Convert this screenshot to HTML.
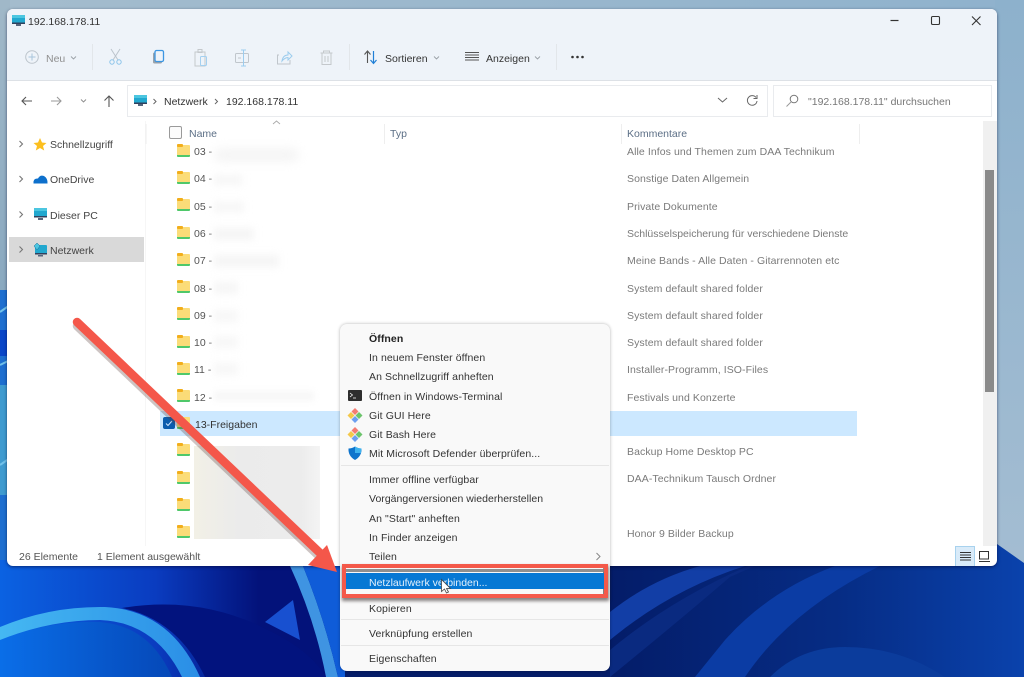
<!DOCTYPE html>
<html lang="de"><head><meta charset="utf-8"><title>192.168.178.11</title>
<style>
html,body{margin:0;padding:0;width:1024px;height:677px;overflow:hidden;background:#0a3aa8}
body{font-family:"Liberation Sans",sans-serif;font-size:10.5px;color:#333;position:relative}
#root{position:absolute;inset:0;filter:blur(.35px)}
.a{position:absolute}
.t{position:absolute;line-height:14px;height:14px;white-space:nowrap;margin-top:1px}
.win{position:absolute;left:7px;top:9px;width:990px;height:557px;background:#fff;border-radius:6px;box-shadow:0 1px 3px rgba(0,0,40,.55);overflow:hidden}
.c{color:#7a7a7a;letter-spacing:.08px}
.f{position:absolute;left:177px;width:13px;height:12px;background:#fbdc78;border-radius:1px;border-bottom:2px solid #4fc86a;box-sizing:border-box}
.f:before{content:"";position:absolute;left:0;top:-1px;width:6px;height:3px;background:#f2ae1c;border-radius:1px}
.n{color:#555;font-size:10.5px}
.menu{position:absolute;left:340px;top:324px;width:270px;height:347px;background:#f9f9f9;border-radius:7px;box-shadow:0 0 3px rgba(0,0,0,.3)}
.m{color:#333;letter-spacing:.09px}
.sep{position:absolute;left:341px;width:268px;height:1px;background:#e6e6e6}
svg{position:absolute;overflow:visible}
</style></head><body><div id="root">

<svg class="a" style="left:0;top:0" width="1024" height="677" viewBox="0 0 1024 677">
<defs>
<linearGradient id="sky" x1="0" y1="0" x2="1" y2="0"><stop offset="0" stop-color="#a4bccd"/><stop offset="1" stop-color="#8fb2cd"/></linearGradient>
<linearGradient id="bl" x1="0" y1="0" x2="0" y2="1"><stop offset="0" stop-color="#a0b8c8"/><stop offset="1" stop-color="#8aa9c0"/></linearGradient>
<linearGradient id="rt" x1="0" y1="0" x2="0" y2="1"><stop offset="0" stop-color="#8db1cc"/><stop offset="1" stop-color="#a4bdd2"/></linearGradient>
<linearGradient id="top" x1="0" y1="0" x2="1" y2="0"><stop offset="0" stop-color="#0b62e2"/><stop offset=".45" stop-color="#0a3cc0"/><stop offset=".75" stop-color="#03127a"/><stop offset="1" stop-color="#03127a"/></linearGradient>
<linearGradient id="sw" x1="0" y1="0" x2="1" y2="0"><stop offset="0" stop-color="#45b8f2"/><stop offset="1" stop-color="#2a8ee6"/></linearGradient>
<linearGradient id="low" x1="0" y1="0" x2="1" y2="0"><stop offset="0" stop-color="#0a6ee8"/><stop offset="1" stop-color="#0548b8"/></linearGradient>
<linearGradient id="br" x1="0" y1="0" x2="1" y2="0"><stop offset="0" stop-color="#041c68"/><stop offset=".55" stop-color="#062c84"/><stop offset="1" stop-color="#0a42ac"/></linearGradient>
</defs>
<rect width="1024" height="677" fill="#041c68"/>
<rect width="1024" height="12" fill="url(#sky)"/>
<rect x="0" y="0" width="10" height="290" fill="url(#bl)"/>
<rect x="995" y="0" width="29" height="580" fill="url(#rt)"/>
<rect x="0" y="290" width="10" height="290" fill="#1e6fd0"/>
<rect x="0" y="330" width="10" height="26" fill="#0a46c8"/>
<rect x="0" y="385" width="10" height="110" fill="#3f9bd0"/>
<path d="M0 312L10 305M0 365L10 360M0 465L10 458" stroke="#72c2ea" stroke-width="2" fill="none"/>
<!-- bottom-left -->
<rect x="0" y="560" width="345" height="117" fill="url(#top)"/>
<path d="M0 640Q50 620 100 622Q150 626 172 677H0Z" fill="url(#low)"/>
<path d="M0 627Q50 606 105 607Q170 610 200 677H182Q155 622 100 620Q50 620 0 640Z" fill="url(#sw)"/>
<path d="M122 608Q200 595 268 630Q310 650 326 677H205Q178 620 122 608Z" fill="#02137e"/>
<path d="M265 622L293 600L300 640Z" fill="#1850d0"/>
<path d="M290 566H303Q325 620 338 677H326Q315 620 290 566Z" fill="#3f94e2"/>
<path d="M303 566H345V677H338Q325 620 303 566Z" fill="#0f5cd8"/>
<!-- bottom-right -->
<path d="M605 560H997V544L1024 563V677H605Z" fill="url(#br)"/>
<path d="M610 640Q670 590 745 566H700Q650 580 610 612Z" fill="#123ea6"/>
<path d="M610 677Q680 620 730 577L755 566H748Q670 600 610 650Z" fill="#0a2a80"/>
<path d="M880 566H835Q770 590 725 640L695 677H745Q790 610 880 566Z" fill="#0b3ca4"/>
<path d="M770 677Q800 647 845 647Q900 647 945 677Z" fill="#0b3c9c"/>
</svg>

<div class="win">
<div class="a" style="left:0;top:0;width:990px;height:71px;background:#eef3f9;border-bottom:1px solid #dde1e6"></div>
</div>

<!-- title -->
<svg style="left:12px;top:15px" width="13" height="12"><rect x="0" y="0" width="13" height="8.5" rx="1" fill="#22a8cf"/><rect x="0" y="0" width="13" height="3" fill="#4cc6e0"/><rect x="0" y="7.5" width="13" height="1.5" fill="#30415e"/><rect x="4" y="9" width="5" height="2" fill="#56657c"/></svg>
<div class="t" style="left:28px;top:14px;color:#333">192.168.178.11</div>
<svg style="left:0;top:0" width="1024" height="110" fill="none">
<path d="M890.5 20.5H898.5" stroke="#333" stroke-width="1.2"/>
<rect x="931.5" y="16.5" width="8" height="8" rx="1.2" stroke="#333" stroke-width="1.1"/>
<path d="M972 16.5L980.5 25M980.5 16.5L972 25" stroke="#333" stroke-width="1.1"/>
<!-- toolbar -->
<circle cx="32" cy="57" r="6.3" stroke="#bcc4cc"/><path d="M32 53.5V60.5M28.5 57H35.5" stroke="#a8c4dc"/>
<path d="M92.5 44V70M349.5 44V70M556.5 44V70" stroke="#e2e6ea"/>
<path d="M111 49L118 60M120 49L113 60" stroke="#bcc4cc"/><circle cx="112" cy="62" r="2.2" stroke="#8cc4ea"/><circle cx="119" cy="62" r="2.2" stroke="#8cc4ea"/>
<rect x="153" y="52.5" width="9" height="11" rx="1.5" fill="#9aa2aa"/><rect x="155" y="50.5" width="8.5" height="11" rx="1.5" fill="#eef3f9" stroke="#3c96e2" stroke-width="1.3"/>
<path d="M195 52H205V66H195Z" stroke="#c4c8cc"/><rect x="198" y="49.5" width="4" height="3" stroke="#c4c8cc"/><rect x="200.5" y="56.5" width="6" height="9" rx="1" stroke="#a4d0f0"/>
<rect x="235.500" y="53.5" width="13" height="9" rx="1" stroke="#c0c6cc"/><path d="M243.500 50V66M241 50H246M241 66H246" stroke="#9cccee"/><path d="M238 58H241" stroke="#c0c6cc"/>
<path d="M279 55H277.500V64H290V60" stroke="#c0c6cc"/><path d="M282 61Q283 55 288 55V52L292 56L288 60V57.500Q285 57.500 282 61Z" stroke="#9cccee"/>
<path d="M320.500 53H332.500M323.500 53V51H329.500V53M322 53V64.500H331V53M325 56V62M328 56V62" stroke="#c4c8cc"/>
<path d="M367.500 63V51.500M364.500 54.500L367.500 51L370.500 54.500" stroke="#555" stroke-width="1.1"/><path d="M373.500 51V63M370.500 60L373.500 63.500L376.500 60" stroke="#1f7fd6" stroke-width="1.2"/>
<path d="M465 52.500H479M465 55H479M465 57.500H479M465 60H479" stroke="#555"/>
<path d="M71 56.500L73.500 59L76 56.500M434 56.500L436.500 59L439 56.500M535 56.500L537.500 59L540 56.500" stroke="#9aa0a6" stroke-width=".9"/>
<circle cx="572.500" cy="57" r="1.3" fill="#333"/><circle cx="577.500" cy="57" r="1.3" fill="#333"/><circle cx="582.500" cy="57" r="1.3" fill="#333"/>
<!-- nav -->
<path d="M32 101H22M26 97L22 101L26 105" stroke="#555" stroke-width="1.1"/>
<path d="M51 101H61M57 97L61 101L57 105" stroke="#9a9a9a" stroke-width="1.1"/>
<path d="M81 99.500L83.500 102L86 99.500" stroke="#8a8a8a" stroke-width=".9"/>
<path d="M109 107V96M104.500 100.500L109 96L113.500 100.500" stroke="#555" stroke-width="1.1"/>
</svg>
<div class="t" style="left:46px;top:51px;color:#909090">Neu</div>
<div class="t" style="left:385px;top:51px;color:#333">Sortieren</div>
<div class="t" style="left:486px;top:51px;color:#333">Anzeigen</div>

<!-- address -->
<div class="a" style="left:127px;top:85px;width:639px;height:30px;border:1px solid #e9ebee;background:#fff"></div>
<div class="a" style="left:773px;top:85px;width:217px;height:30px;border:1px solid #e9ebee;background:#fff"></div>
<svg style="left:134px;top:95px" width="13" height="12"><rect x="0" y="0" width="13" height="8.5" rx="1" fill="#22a8cf"/><rect x="0" y="0" width="13" height="3" fill="#4cc6e0"/><rect x="0" y="7.5" width="13" height="1.5" fill="#30415e"/><rect x="4" y="9" width="5" height="2" fill="#56657c"/></svg>
<svg style="left:0;top:0" width="1024" height="130" fill="none">
<path d="M153.500 99L156 101.500L153.500 104M215 99L217.500 101.500L215 104" stroke="#666"/>
<path d="M718 98L722.500 102L727 98" stroke="#666"/>
<path d="M756 97.500A4.800 4.800 0 1 0 757 101M757 95V98.500H753.500" stroke="#666"/>
<circle cx="794" cy="99" r="3.800" stroke="#777"/><path d="M791 102L786.500 106.500" stroke="#999"/>
</svg>
<div class="t" style="left:164px;top:94px;color:#333">Netzwerk</div>
<div class="t" style="left:226px;top:94px;color:#333">192.168.178.11</div>
<div class="t" style="left:808px;top:94px;color:#777">"192.168.178.11" durchsuchen</div>

<!-- nav tree -->
<div class="a" style="left:9px;top:237px;width:135px;height:25px;background:#d9d9d9"></div>
<div class="a" style="left:145px;top:121px;width:1px;height:425px;background:#f6f6f6"></div>
<svg style="left:0;top:0" width="160" height="270" fill="none">
<path d="M19.500 141L22.500 144L19.500 147M19.500 176L22.500 179L19.500 182M19.500 211.500L22.500 214.500L19.500 217.500M19.500 246.500L22.500 249.500L19.500 252.500" stroke="#777" stroke-width="1.100"/>
<path d="M40 138L42 142.500L46.500 143L43 146L44.200 150.500L40 148L35.800 150.500L37 146L33.500 143L38 142.500Z" fill="#fcbf1e"/>
<path d="M33.500 183.500Q33 178 38 178.500Q40 174.500 44 176Q48 178.500 47.500 183.500Z" fill="#0d70cc"/>
<rect x="34" y="208" width="13" height="9" rx="1" fill="#22a8cf"/><rect x="34" y="208" width="13" height="3" fill="#4cc6e0"/><rect x="34" y="216" width="13" height="1.500" fill="#30415e"/><rect x="38" y="218" width="5" height="2" fill="#56657c"/>
<rect x="35" y="245" width="12" height="9" rx="1" fill="#22a8cf"/><rect x="35" y="253" width="12" height="1.500" fill="#30415e"/><rect x="38" y="255" width="5" height="1.500" fill="#56657c"/><path d="M34 246L37 243L40 246L37 250Z" fill="#4cc6e0" stroke="#1a6e9a" stroke-width=".5"/>
</svg>
<div class="t" style="left:50px;top:137px;color:#444">Schnellzugriff</div>
<div class="t" style="left:50px;top:172px;color:#444">OneDrive</div>
<div class="t" style="left:50px;top:208px;color:#444">Dieser PC</div>
<div class="t" style="left:50px;top:243px;color:#444">Netzwerk</div>

<!-- headers -->
<div class="a" style="left:169px;top:126px;width:11px;height:11px;border:1px solid #9a9a9a;border-radius:2px;background:#fbfbfb"></div>
<svg style="left:0;top:0" width="900" height="145" fill="none"><path d="M273 124L276.500 121L280 124" stroke="#aaa" stroke-width=".9"/><path d="M384.500 124V144M621.500 124V144M859.500 124V144M146 124V144" stroke="#eeeeee"/></svg>
<div class="t" style="left:189px;top:126px;color:#5c6f86">Name</div>
<div class="t" style="left:390px;top:126px;color:#5c6f86">Typ</div>
<div class="t" style="left:627px;top:126px;color:#5c6f86">Kommentare</div>

<!-- scrollbar -->
<div class="a" style="left:983px;top:121px;width:14px;height:425px;background:#f0f0f0"></div>
<div class="a" style="left:985px;top:170px;width:9px;height:222px;background:#8a8a8a"></div>

<!-- rows -->
<div class="a" style="left:160px;top:411px;width:697px;height:25px;background:#cce8ff"></div>
<div class="f" style="top:145px"></div><div class="t n" style="left:194px;top:144px">03 -</div>
<div class="f" style="top:172px"></div><div class="t n" style="left:194px;top:171px">04 -</div>
<div class="f" style="top:199px"></div><div class="t n" style="left:194px;top:199px">05 -</div>
<div class="f" style="top:227px"></div><div class="t n" style="left:194px;top:226px">06 -</div>
<div class="f" style="top:254px"></div><div class="t n" style="left:194px;top:253px">07 -</div>
<div class="f" style="top:281px"></div><div class="t n" style="left:194px;top:281px">08 -</div>
<div class="f" style="top:308px"></div><div class="t n" style="left:194px;top:308px">09 -</div>
<div class="f" style="top:336px"></div><div class="t n" style="left:194px;top:335px">10 -</div>
<div class="f" style="top:363px"></div><div class="t n" style="left:194px;top:362px">11 -</div>
<div class="f" style="top:390px"></div><div class="t n" style="left:194px;top:390px">12 -</div>
<div class="f" style="top:417px"></div><div class="t n" style="left:195px;top:417px;color:#333">13-Freigaben</div>
<div class="f" style="top:444px"></div>
<div class="f" style="top:472px"></div>
<div class="f" style="top:499px"></div>
<div class="f" style="top:526px"></div>
<div class="a" style="left:163px;top:417px;width:12px;height:12px;background:#0b5cad;border-radius:2px"></div>
<svg style="left:163px;top:417px" width="12" height="12" fill="none"><path d="M3 6.500L5 8.500L9 4" stroke="#cfe6ff" stroke-width="1"/></svg>

<!-- blurred names -->
<div class="a" style="left:214px;top:148px;width:85px;height:14px;background:#f5f5f5;filter:blur(5px);border-radius:7px"></div>
<div class="a" style="left:214px;top:175px;width:28px;height:10px;background:#f6f6f6;filter:blur(4px)"></div>
<div class="a" style="left:214px;top:202px;width:30px;height:10px;background:#f6f6f6;filter:blur(4px)"></div>
<div class="a" style="left:214px;top:228px;width:40px;height:12px;background:#f5f5f5;filter:blur(4px)"></div>
<div class="a" style="left:214px;top:255px;width:65px;height:12px;background:#f5f5f5;filter:blur(4px)"></div>
<div class="a" style="left:214px;top:282px;width:24px;height:12px;background:#f6f6f6;filter:blur(4px)"></div>
<div class="a" style="left:214px;top:310px;width:24px;height:12px;background:#f7f7f7;filter:blur(4px)"></div>
<div class="a" style="left:214px;top:336px;width:24px;height:12px;background:#f7f7f7;filter:blur(4px)"></div>
<div class="a" style="left:214px;top:363px;width:24px;height:12px;background:#f7f7f7;filter:blur(4px)"></div>
<div class="a" style="left:214px;top:391px;width:100px;height:10px;background:#f7f7f7;filter:blur(3px)"></div>
<div class="a" style="left:194px;top:446px;width:126px;height:93px;background:linear-gradient(90deg,#f2f0e6 0,#ebebeb 35%,#ececec 85%,#f4f4f4 100%)"></div>

<!-- comments -->
<div class="t c" style="left:627px;top:144px">Alle Infos und Themen zum DAA Technikum</div>
<div class="t c" style="left:627px;top:171px">Sonstige Daten Allgemein</div>
<div class="t c" style="left:627px;top:199px">Private Dokumente</div>
<div class="t c" style="left:627px;top:226px;letter-spacing:0">Schlüsselspeicherung für verschiedene Dienste</div>
<div class="t c" style="left:627px;top:253px">Meine Bands - Alle Daten - Gitarrennoten etc</div>
<div class="t c" style="left:627px;top:281px">System default shared folder</div>
<div class="t c" style="left:627px;top:308px">System default shared folder</div>
<div class="t c" style="left:627px;top:335px">System default shared folder</div>
<div class="t c" style="left:627px;top:362px">Installer-Programm, ISO-Files</div>
<div class="t c" style="left:627px;top:390px">Festivals und Konzerte</div>
<div class="t c" style="left:627px;top:444px">Backup Home Desktop PC</div>
<div class="t c" style="left:627px;top:471px">DAA-Technikum Tausch Ordner</div>
<div class="t c" style="left:627px;top:526px">Honor 9 Bilder Backup</div>

<!-- status -->
<div class="t" style="left:19px;top:549px;color:#555">26 Elemente</div>
<div class="t" style="left:97px;top:549px;color:#555">1 Element ausgewählt</div>
<div class="a" style="left:955px;top:546px;width:18px;height:19px;background:#d9ebf9;border:1px solid #a8d2ee;border-bottom:0"></div>
<svg style="left:0;top:0" width="1000" height="570" fill="none">
<path d="M960 552.500H971M960 555H971M960 557.500H971M960 560H971" stroke="#333"/>
<rect x="979.500" y="551.500" width="9" height="7.500" stroke="#333"/><path d="M979 561.500H990" stroke="#333"/>
</svg>

<!-- arrow -->
<svg style="left:0;top:0" width="1024" height="677" fill="none">
<path d="M78 324L322 556" stroke="#5b3b38" stroke-width="8.500" stroke-linecap="round" opacity=".3" transform="translate(-1,2)"/>
<path d="M77 322L320 553" stroke="#f4574a" stroke-width="8.500" stroke-linecap="round"/>
<path d="M327 545L337 572L308 565Z" fill="#f4574a"/>
</svg>

<!-- menu -->
<div class="menu"></div>
<div class="t m" style="left:369px;top:331px;font-weight:bold;color:#222">Öffnen</div>
<div class="t m" style="left:369px;top:350px">In neuem Fenster öffnen</div>
<div class="t m" style="left:369px;top:369px">An Schnellzugriff anheften</div>
<div class="t m" style="left:369px;top:389px">Öffnen in Windows-Terminal</div>
<div class="t m" style="left:369px;top:408px">Git GUI Here</div>
<div class="t m" style="left:369px;top:427px">Git Bash Here</div>
<div class="t m" style="left:369px;top:446px">Mit Microsoft Defender überprüfen...</div>
<div class="sep" style="top:465px"></div>
<div class="t m" style="left:369px;top:472px">Immer offline verfügbar</div>
<div class="t m" style="left:369px;top:491px;letter-spacing:.02px">Vorgängerversionen wiederherstellen</div>
<div class="t m" style="left:369px;top:511px">An "Start" anheften</div>
<div class="t m" style="left:369px;top:530px">In Finder anzeigen</div>
<div class="t m" style="left:369px;top:549px">Teilen</div>
<div class="t m" style="left:369px;top:601px">Kopieren</div>
<div class="sep" style="top:619px"></div>
<div class="t m" style="left:369px;top:626px">Verknüpfung erstellen</div>
<div class="sep" style="top:645px"></div>
<div class="t m" style="left:369px;top:651px">Eigenschaften</div>

<svg style="left:0;top:0" width="1024" height="677" fill="none">
<rect x="348" y="390" width="14" height="11" rx="1" fill="#2e2e2e"/><path d="M350 393L352.500 395L350 397M353 398H356" stroke="#fff" stroke-width=".8"/>
<path d="M355 408L358.500 411.500L355 415L351.500 411.500Z" fill="#f47c72"/><path d="M359 412L362.500 415.500L359 419L355.500 415.500Z" fill="#6cc46c"/><path d="M351 412L354.500 415.500L351 419L347.500 415.500Z" fill="#f4c84a"/><path d="M355 416L358.500 419.500L355 423L351.500 419.500Z" fill="#6c9ff0"/>
<path d="M355 427L358.500 430.500L355 434L351.500 430.500Z" fill="#f47c72"/><path d="M359 431L362.500 434.500L359 438L355.500 434.500Z" fill="#6cc46c"/><path d="M351 431L354.500 434.500L351 438L347.500 434.500Z" fill="#f4c84a"/><path d="M355 435L358.500 438.500L355 442L351.500 438.500Z" fill="#6c9ff0"/>
<path d="M355 446.500Q358 448.500 361.500 448.500Q362 456 355 460Q348 456 348.500 448.500Q352 448.500 355 446.500Z" fill="#0e74cc"/><path d="M355 446.500Q358 448.500 361.500 448.500L361 453H355Z" fill="#3db2ee"/>
<path d="M596.500 553L600 556.500L596.500 560" stroke="#888"/>
</svg>

<!-- red box -->
<div class="a" style="left:342px;top:566px;width:267px;height:35px;background:rgba(40,30,30,.55);filter:blur(1.500px)"></div>
<div class="a" style="left:344px;top:568px;width:259px;height:27px;background:#f7f7f7"></div>
<div class="a" style="left:344px;top:569px;width:259px;height:3px;background:#8f8f8f"></div>
<div class="a" style="left:346px;top:573px;width:258px;height:16px;background:#0678d4"></div>
<div class="a" style="left:342px;top:564px;width:258px;height:26px;border:4px solid #f4594a"></div>
<div class="t" style="left:369px;top:575px;color:#e4f1fc">Netzlaufwerk verbinden...</div>
<svg style="left:441px;top:579px" width="12" height="16"><path d="M.5.500V12.500L3.500 10L5.500 14L7.500 13L5.500 9.500H9.500Z" fill="#fff" stroke="#444" stroke-width=".8"/></svg>

</div></body></html>
